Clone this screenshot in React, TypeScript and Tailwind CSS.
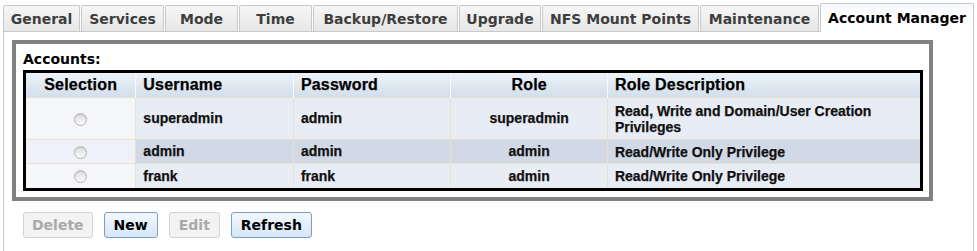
import React from 'react';

type Account = {
  username: string;
  password: string;
  role: string;
  description: string;
};

const tabs: { label: string; width: string }[] = [
  { label: 'General', width: 'w-[77px]' },
  { label: 'Services', width: 'w-[83px]' },
  { label: 'Mode', width: 'w-[73px]' },
  { label: 'Time', width: 'w-[73px]' },
  { label: 'Backup/Restore', width: 'w-[145px]' },
  { label: 'Upgrade', width: 'w-[82px]' },
  { label: 'NFS Mount Points', width: 'w-[157px]' },
  { label: 'Maintenance', width: 'w-[119px]' },
];

const accounts: Account[] = [
  {
    username: 'superadmin',
    password: 'admin',
    role: 'superadmin',
    description: 'Read, Write and Domain/User Creation Privileges',
  },
  { username: 'admin', password: 'admin', role: 'admin', description: 'Read/Write Only Privilege' },
  { username: 'frank', password: 'frank', role: 'admin', description: 'Read/Write Only Privilege' },
];

const rowHeights = ['h-[42px]', 'h-[24px]', 'h-[26px]'];

function Radio() {
  return (
    <span className="inline-block w-[13px] h-[13px] rounded-full border border-[#b4b4b4] bg-linear-to-b from-[#dcdcdc] to-[#fbfbfb] shadow-[inset_0_1px_1px_rgba(0,0,0,0.08)] align-middle" />
  );
}

export default function App() {
  return (
    <div className="w-[977px] h-[251px] bg-white overflow-hidden font-['DejaVu_Sans',sans-serif]">
      {/* Tabs */}
      <div className="ml-[3px] w-[971px] h-[31px] pt-[3px] flex items-end gap-[1px]">
        {tabs.map((t) => (
          <div
            key={t.label}
            className={`${t.width} h-[26px] flex items-center justify-center border border-b-0 border-[#c9c9c9] rounded-t-[2px] bg-linear-to-b from-[#f6f6f6] to-[#e7e7e7] text-[14px] font-bold text-[#3e3e3e] leading-none`}
          >
            {t.label}
          </div>
        ))}
        <div className="flex-1 h-[29px] -mb-px relative z-10 flex items-center justify-center border border-b-0 border-[#c9c9c9] rounded-t-[2px] bg-linear-to-b from-[#f4f8fd] to-white to-40% text-[14px] font-bold text-black leading-none">
          Account Manager
        </div>
      </div>

      {/* Panel */}
      <div className="ml-[3px] w-[971px] h-[220px] border border-b-0 border-[#c9c9c9]">
        <div className="ml-[8px] mt-[8px] w-[921px] border-4 border-[#818181] pt-[7px] pb-[6px]">
          <div className="pl-[7px] text-[14px] font-bold text-black leading-[17px] mb-[2px]">Accounts:</div>
          <table className="ml-[7px] w-[900px] border-[3px] border-black border-collapse table-fixed font-['Liberation_Sans',Arial,sans-serif] text-[14px] font-bold text-[#111] [-webkit-text-stroke:0.25px]">
            <colgroup>
              <col className="w-[111px]" />
              <col className="w-[157px]" />
              <col className="w-[157px]" />
              <col className="w-[156px]" />
              <col className="w-[313px]" />
            </colgroup>
            <thead>
              <tr className="h-[26px] bg-linear-to-b from-[#eef3f9] to-[#d2deea] text-[16px] tracking-[0.2px] text-black">
                <th className="border-r border-[#f7f9fc] text-center font-bold">Selection</th>
                <th className="border-r border-[#f7f9fc] text-left pl-[7px] font-bold">Username</th>
                <th className="border-r border-[#f7f9fc] text-left pl-[7px] font-bold">Password</th>
                <th className="border-r border-[#f7f9fc] text-center font-bold">Role</th>
                <th className="text-left pl-[7px] font-bold">Role Description</th>
              </tr>
            </thead>
            <tbody>
              {accounts.map((a, i) => {
                const hover = i === 1;
                const bg = hover ? 'bg-[#d2d9e6]' : 'bg-[#e8ecf4]';
                const cell = `border-t border-r border-[#e9e0cf] ${bg}`;
                return (
                  <tr key={a.username} className={rowHeights[i]}>
                    <td className={`border-t border-r border-[#e9e0cf] text-center ${hover ? 'bg-[#eef2f8]' : 'bg-[#f4f6fa]'}`}>
                      <Radio />
                    </td>
                    <td className={`${cell} pl-[7px]`}>{a.username}</td>
                    <td className={`${cell} pl-[7px]`}>{a.password}</td>
                    <td className={`${cell} text-center`}>{a.role}</td>
                    <td className={`border-t border-[#e9e0cf] ${bg} pl-[7px] pr-[20px] leading-[16px]`}>
                      {a.description}
                    </td>
                  </tr>
                );
              })}
            </tbody>
          </table>
        </div>

        {/* Buttons */}
        <div className="ml-[19px] mt-[11px] flex gap-[11px] text-[14px] font-bold leading-none">
          <button className="h-[26px] px-[8px] rounded-[3px] border border-[#d2d2d2] bg-[#f3f3f3] text-[#a9a9a9]">Delete</button>
          <button className="h-[26px] px-[9px] rounded-[3px] border border-[#7d9ec4] bg-linear-to-b from-[#f3f8fe] to-[#d5e5f6] text-black">New</button>
          <button className="h-[26px] px-[9px] rounded-[3px] border border-[#d2d2d2] bg-[#f3f3f3] text-[#a9a9a9]">Edit</button>
          <button className="h-[26px] px-[9px] rounded-[3px] border border-[#7d9ec4] bg-linear-to-b from-[#f3f8fe] to-[#d5e5f6] text-black">Refresh</button>
        </div>
      </div>
    </div>
  );
}
